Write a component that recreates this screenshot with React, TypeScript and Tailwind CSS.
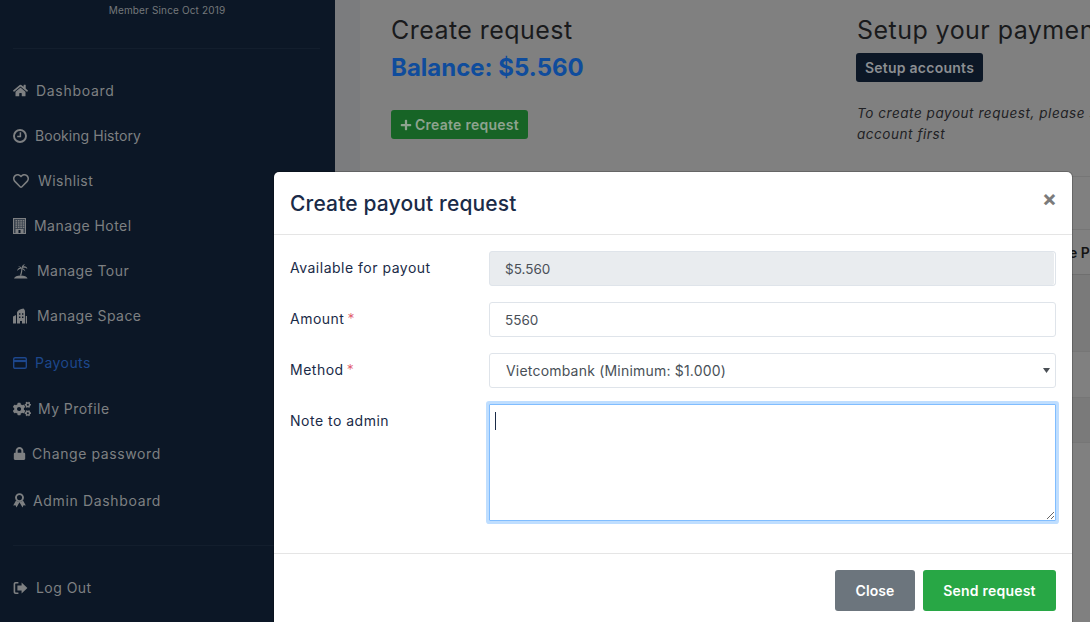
import { FaCogs, FaHome, FaLock, FaPlus, FaRegHeart } from 'react-icons/fa';
import type { ReactNode } from 'react';

function ClockIcon() {
  return (
    <svg width="14" height="14" viewBox="0 0 14 14" fill="none" stroke="currentColor">
      <circle cx="7" cy="7" r="6" strokeWidth="1.9" />
      <path d="M7.4 3.2v4.3H4.2" strokeWidth="1.5" />
    </svg>
  );
}

function HotelIcon() {
  const cols = [2.5, 4.9, 7.3, 9.7];
  const rows = [2, 4.2, 6.4, 8.6];
  return (
    <svg width="13" height="16" viewBox="0 0 13 16">
      <rect width="13" height="16" fill="currentColor" />
      <rect x="1" y="1" width="11" height="14" fill="#38414d" />
      {rows.map((y) => cols.map((x) => <rect key={`${x}-${y}`} x={x} y={y} width="1.6" height="1.5" fill="currentColor" />))}
      <rect x="2.5" y="11" width="8" height="4" fill="currentColor" />
      <rect x="5.5" y="12" width="2" height="3" fill="#0c1726" />
    </svg>
  );
}

function PalmIcon() {
  return (
    <svg width="16" height="16" viewBox="0 0 16 16" fill="currentColor">
      <path d="M8.4 5C8.3 7.8 7.8 10.4 6.8 12.6h1.5c.8-2.5 1.2-5 1.2-7.6z" />
      <path d="M9 5.4C8.2 3.4 6.2 2.8 4.6 4.2c1.3-.3 2.3-.1 3.1.7C6 4.7 4.4 5.6 4.2 8c1.2-1.6 2.7-2.3 4.8-2.6z" />
      <path d="M8.6 5.2c.2-2.4 1.6-4 3.6-4-1 .5-1.6 1.2-1.9 2.2 1.8-.7 3.8.2 4 2.6C13 4.6 11 4.6 8.6 5.2z" />
      <path d="M9.2 5.2c1.4.3 2.9 1.3 3.2 3.2-1-1.2-2.2-2-3.6-2.5z" />
      <path d="M1 15.6c.6-1.8 3-3 6.6-3s6.4 1.2 7 3z" />
    </svg>
  );
}

function SpaceIcon() {
  return (
    <svg width="14" height="16" viewBox="0 0 14 16" fill="currentColor">
      <path fillRule="evenodd" d="M4 15.5V4.2C5 2 7.5.8 10.5.5c1 1 1.5 2 1.5 3.2v11.8H9v-2.4H7v2.4zM6 5.2h1.4v1.6H6zm3 0h1.4v1.6H9zM6 8.4h1.4V10H6zm3 0h1.4V10H9z" />
      <path d="M0 15.5V8.5l3-1.5v8.5zM12.8 8H14v7.5h-1.2z" />
    </svg>
  );
}

function CardIcon() {
  return (
    <svg width="14" height="12" viewBox="0 0 14 12" fill="none" stroke="currentColor">
      <rect x="0.7" y="0.7" width="12.6" height="10.6" rx="1.4" strokeWidth="1.4" />
      <path d="M1 4h12" strokeWidth="2.2" />
    </svg>
  );
}

function AwardIcon() {
  return (
    <svg width="13" height="15" viewBox="0 0 13 15" fill="currentColor">
      <circle cx="6.5" cy="4.6" r="3.5" fill="none" stroke="currentColor" strokeWidth="1.9" />
      <path d="M3 7.6.2 12.4l2.3-.2 1 2.2 3-5.2 3 5.2 1-2.2 2.3.2L10 7.6c-.9.8-2.1 1.3-3.5 1.3S3.900 8.400 3 7.600z" />
    </svg>
  );
}

function LogoutIcon() {
  return (
    <svg width="15" height="14" viewBox="0 0 15 14" fill="currentColor">
      <path d="M5.4 1H2.6C1.4 1 .6 1.8.6 3v8c0 1.2.8 2 2 2h2.8v-1.6H2.8c-.4 0-.6-.2-.6-.6V3.2c0-.4.2-.6.6-.6h2.6z" />
      <path d="M8.6 1.600v3H4.400v4.800h4.200v3L14.400 7z" />
    </svg>
  );
}

type NavItem = { label: string; icon: ReactNode; iconBox: string; extra: string; active?: boolean };

const navItems: NavItem[] = [
  { label: 'Dashboard', icon: <FaHome size={15} />, iconBox: 'w-[23px]', extra: 'tracking-[0.7px]' },
  { label: 'Booking History', icon: <ClockIcon />, iconBox: 'w-[22px]', extra: 'tracking-[0.05px]' },
  { label: 'Wishlist', icon: <FaRegHeart size={16} />, iconBox: 'w-[25px]', extra: 'tracking-[0.45px]' },
  { label: 'Manage Hotel', icon: <HotelIcon />, iconBox: 'w-[21px]', extra: 'tracking-[0.45px]' },
  { label: 'Manage Tour', icon: <PalmIcon />, iconBox: 'w-[24px]', extra: 'tracking-[0.45px]' },
  { label: 'Manage Space', icon: <SpaceIcon />, iconBox: 'w-[24px]', extra: 'tracking-[0.45px]' },
  { label: 'Payouts', icon: <CardIcon />, iconBox: 'w-[22px]', extra: 'mt-[2px] tracking-[0.45px]', active: true },
  { label: 'My Profile', icon: <FaCogs size={18} />, iconBox: 'w-[25px]', extra: 'mt-px tracking-[0.45px]' },
  { label: 'Change password', icon: <FaLock size={13} />, iconBox: 'w-[19px]', extra: 'tracking-[0.6px]' },
  { label: 'Admin Dashboard', icon: <AwardIcon />, iconBox: 'w-[20px]', extra: 'mt-[2px] tracking-[0.65px]' },
];

function NavRow({ item }: { item: NavItem }) {
  return (
    <div className={`flex h-[45px] items-center text-[14px] ${item.extra} ${item.active ? 'text-[#1d478c]' : 'text-[#7e8082]'}`}>
      <span className={`flex shrink-0 items-center ${item.iconBox}`}>{item.icon}</span>
      <span>{item.label}</span>
    </div>
  );
}

function Sidebar() {
  return (
    <aside className="h-[622px] w-[335px] shrink-0 bg-[#0c1726] px-[13px]">
      <p className="h-5 pr-[1px] text-center text-[10px] leading-5 tracking-[0.15px] text-[#74777b]">Member Since Oct 2019</p>
      <div className="mt-7 mr-[2px] h-px bg-[#131e2d]" />
      <nav className="mt-[19px]">
        {navItems.map((item) => (
          <NavRow key={item.label} item={item} />
        ))}
      </nav>
      <div className="mt-[22px] mr-[2px] h-px bg-[#131e2d]" />
      <div className="mt-[19px] flex h-[45px] items-center text-[14px] tracking-[0.45px] text-[#7e8082]">
        <span className="flex w-[23px] shrink-0 items-center"><LogoutIcon /></span>
        <span>Log Out</span>
      </div>
    </aside>
  );
}

function Background() {
  return (
    <main className="h-[622px] min-w-0 flex-1 overflow-hidden bg-[#7b7c7e] pl-[25px]">
      <div className="h-full bg-[#808080]">
        <section className="flex h-[177px] border-b border-[#767676] pt-[13px] pl-[31px]">
          <div className="w-[466px] shrink-0">
            <h2 className="text-[25px] leading-[34px] tracking-[0.45px] text-[#191a1c]">Create request</h2>
            <p className="mt-[4px] text-[24px] leading-[34px] font-bold text-[#0f4c9c]">Balance: $5.560</p>
            <button className="mt-[25px] flex h-[29px] w-[137px] items-center justify-center gap-[3px] rounded-[3px] bg-[#176426] text-[14px] font-semibold tracking-[0.25px] text-[#8ea38f]">
              <FaPlus size={12} />
              Create request
            </button>
          </div>
          <div className="shrink-0 whitespace-nowrap">
            <h2 className="text-[25px] leading-[34px] tracking-[0.45px] text-[#191a1c]">Setup your payment</h2>
            <button className="mt-[6px] ml-[-1px] flex h-[29px] w-[127px] items-center justify-center rounded-[3px] bg-[#0c1726] text-[14px] font-semibold tracking-[0.25px] text-[#8b8e92]">Setup accounts</button>
            <p className="mt-[21px] text-[13.5px] leading-[21px] tracking-[0.55px] text-[#202124] italic">
              To create payout request, please setup your payment
              <br />
              account first
            </p>
          </div>
        </section>
        <div className="h-[53px] border-b border-[#767676]" />
        <div className="flex h-[45px] items-center border-b border-[#6f6f6f] pl-[686px] text-[14px] font-semibold whitespace-nowrap text-[#141414]">Date Processed</div>
        <div className="h-[77px] border-b border-[#767676] bg-[#7a7a7a]" />
        <div className="h-[46px] border-b border-[#767676]" />
        <div className="h-[45px] border-b border-[#767676] bg-[#7a7a7a]" />
      </div>
    </main>
  );
}

const fieldBase = 'h-[35px] w-full rounded-[3px] border border-[#dfe4ea] text-[13.5px] text-[#495057] outline-none';

function FieldLabel({ text, required }: { text: string; required?: boolean }) {
  return (
    <label className="mb-[2px] w-[199px] shrink-0 text-[14px] tracking-[0.5px] text-[#1a2b48]">
      {text}
      {required ? <span className="ml-[3px] font-light text-[#e0596a]">*</span> : null}
    </label>
  );
}

function PayoutModal() {
  return (
    <div className="absolute top-[172px] left-[274px] h-[460px] w-[798px] rounded-[5px] bg-white shadow-[0_0_0_1px_rgba(0,0,0,0.2)]">
      <header className="flex h-[63px] items-start justify-between border-b border-[#e5e5e5] pr-[15px] pl-4">
        <h3 className="mt-[18px] text-[21px] leading-7 font-medium tracking-[0.15px] text-[#1a2b48]">Create payout request</h3>
        <span className="mt-[8px] text-[22px] leading-9 font-bold text-[#7b7b7b]">×</span>
      </header>
      <form className="flex h-[319px] flex-col gap-4 border-b border-[#e5e5e5] pt-4 pr-4 pl-4">
        <div className="flex items-center">
          <FieldLabel text="Available for payout" />
          <input className={`${fieldBase} bg-[#e9ecef] px-[15px] shadow-[inset_-1px_0_0_#fff]`} value="$5.560" readOnly />
        </div>
        <div className="flex items-center">
          <FieldLabel text="Amount" required />
          <input className={`${fieldBase} bg-white px-[15px]`} value="5560" readOnly />
        </div>
        <div className="flex items-center">
          <FieldLabel text="Method" required />
          <div className="relative w-full">
            <select className={`${fieldBase} appearance-none bg-white pl-4 text-[14px] tracking-[0.2px]`} defaultValue="vcb">
              <option value="vcb">Vietcombank (Minimum: $1.000)</option>
            </select>
            <svg className="absolute top-[15px] right-[6px]" width="7" height="5" viewBox="0 0 7 5" fill="#4a4f55">
              <path d="M0 0h7L3.5 5z" />
            </svg>
          </div>
        </div>
        <div className="flex items-start">
          <label className="mt-[6px] w-[199px] shrink-0 text-[14px] tracking-[0.5px] text-[#1a2b48]">Note to admin</label>
          <div className="relative w-full">
            <textarea className="block h-[117px] w-full rounded-[1px] border border-[#80bdff] bg-white caret-transparent shadow-[0_0_0_3px_rgba(0,123,255,0.25)] outline-none" />
            <span className="absolute top-[8px] left-[6px] h-[18px] w-px bg-[#1a2b48]" />
          </div>
        </div>
      </form>
      <footer className="flex justify-end gap-2 pt-4 pr-4">
        <button className="h-[41px] w-[80px] rounded-[3px] bg-[#6c757d] text-[14px] font-semibold tracking-[0.1px] text-white">Close</button>
        <button className="h-[41px] w-[133px] rounded-[3px] bg-[#28a745] text-[14px] font-semibold tracking-[0.2px] text-white">Send request</button>
      </footer>
    </div>
  );
}

export default function App() {
  return (
    <div className="relative flex h-[622px] w-[1090px] overflow-hidden font-['Inter','Noto_Sans',sans-serif]">
      <Sidebar />
      <Background />
      <PayoutModal />
    </div>
  );
}
